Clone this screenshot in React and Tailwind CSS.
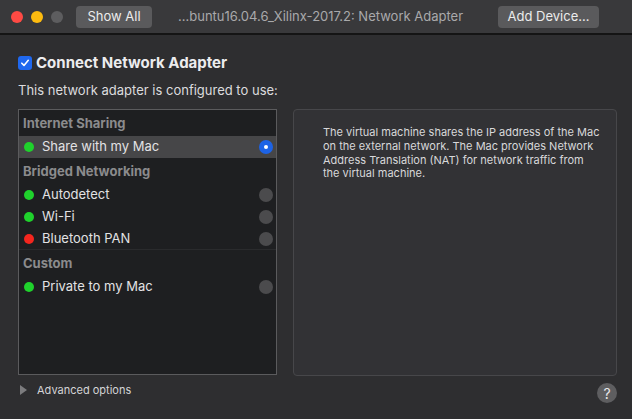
import React from "react";

const ROWS = [
  { type: "header", label: "Internet Sharing" },
  { type: "item", label: "Share with my Mac", dot: "green", selected: true },
  { type: "header", label: "Bridged Networking" },
  { type: "item", label: "Autodetect", dot: "green" },
  { type: "item", label: "Wi-Fi", dot: "green" },
  { type: "item", label: "Bluetooth PAN", dot: "red", divider: true },
  { type: "header", label: "Custom" },
  { type: "item", label: "Private to my Mac", dot: "green" },
];

function Radio({ on }) {
  if (on) {
    return (
      <span className="w-[14px] h-[14px] rounded-full bg-[#1d63e6] flex items-center justify-center">
        <span className="w-[4px] h-[4px] rounded-full bg-white" />
      </span>
    );
  }
  return <span className="w-[14px] h-[14px] rounded-full bg-[#4b4b4d]" />;
}

function Row({ r }) {
  if (r.type === "header") {
    return (
      <div className="h-[26px] flex items-center pt-[2px] pl-[4px] text-[13px] font-bold text-[#8b8b8d]">
        {r.label}
      </div>
    );
  }
  return (
    <div
      className={`h-[22px] flex items-center pl-[5px] pr-[3px] ${
        r.selected ? "bg-[#464648]" : ""
      } ${r.divider ? "border-b border-[#2a2b2d]" : ""}`}
    >
      <span
        className={`w-[10px] h-[10px] rounded-full ${
          r.dot === "red" ? "bg-[#f5261e]" : "bg-[#1fd22c]"
        }`}
      />
      <span className="ml-[8px] flex-1 text-[13px] text-[#e2e2e4]">{r.label}</span>
      <Radio on={r.selected} />
    </div>
  );
}

export default function App() {
  return (
    <div
      className="w-[632px] h-[419px] bg-[#2e2e30] overflow-hidden"
      style={{ fontFamily: "Inter, 'Liberation Sans', sans-serif" }}
    >
      {/* toolbar */}
      <div className="h-[35px] bg-[#39393b] border-b-2 border-[#141414] flex items-start pt-[6px]">
        <div className="flex items-center gap-[8px] pl-[11px] pt-[5px]">
          <span className="w-[12px] h-[12px] rounded-full bg-[#fe4a44]" />
          <span className="w-[12px] h-[12px] rounded-full bg-[#fdbb0f]" />
          <span className="w-[12px] h-[12px] rounded-full bg-[#5d5d5f]" />
        </div>
        <button className="ml-[13px] w-[76px] h-[22px] rounded-[4px] bg-[#5a5a5c] text-[13px] text-[#ececec] flex items-center justify-center">
          Show All
        </button>
        <div className="ml-[26px] h-[22px] w-[300px] flex items-center text-[13px] text-[#a9a9ab] whitespace-nowrap">
          …buntu16.04.6_Xilinx-2017.2: Network Adapter
        </div>
        <button className="ml-[20px] w-[101px] h-[22px] rounded-[4px] bg-[#5a5a5c] text-[13px] text-[#ececec] flex items-center justify-center">
          Add Device…
        </button>
      </div>

      <div className="px-[18px] pr-[15px]">
        <div className="mt-[20px] flex items-center h-[16px]">
          <span className="w-[14px] h-[14px] rounded-[3px] bg-[#1f68ef] flex items-center justify-center">
            <svg width="10" height="10" viewBox="0 0 10 10">
              <path d="M1.8 5.2 L4 7.4 L8.3 2.3" fill="none" stroke="white" strokeWidth="1.6" strokeLinecap="round" strokeLinejoin="round" />
            </svg>
          </span>
          <span className="ml-[4px] text-[15px] font-bold text-[#ececee]">Connect Network Adapter</span>
        </div>
        <div className="mt-[12px] h-[16px] flex items-center text-[13px] text-[#dcdcde]">
          This network adapter is configured to use:
        </div>

        <div className="mt-[10px] flex gap-[16px] h-[267px]">
          <div className="w-[259px] h-[266px] bg-[#1e1f21] border border-[#5b5b5d]">
            {ROWS.map((r, i) => (
              <Row key={i} r={r} />
            ))}
          </div>
          <div className="flex-1 h-[267px] bg-[#323235] border border-[#47474a] rounded-[4px] pl-[29px] pt-[16px]">
            <p className="text-[11px] leading-[13.8px] text-[#d8d8da] whitespace-nowrap">
              The virtual machine shares the IP address of the Mac
              <br />
              on the external network. The Mac provides Network
              <br />
              Address Translation (NAT) for network traffic from
              <br />
              the virtual machine.
            </p>
          </div>
        </div>

        <div className="mt-[4px] flex items-start justify-between">
          <div className="flex items-center h-[20px] pl-[2px]">
            <svg width="8" height="10" viewBox="0 0 8 10">
              <path d="M0 0 L7 5 L0 10 Z" fill="#7c7c7e" />
            </svg>
            <span className="ml-[9px] text-[11px] text-[#d4d4d6]">Advanced options</span>
          </div>
          <span className="w-[20px] h-[20px] rounded-full bg-[#5e5e60] text-[#e8e8ea] text-[14px] flex items-center justify-center mt-[3px]">
            ?
          </span>
        </div>
      </div>
    </div>
  );
}
